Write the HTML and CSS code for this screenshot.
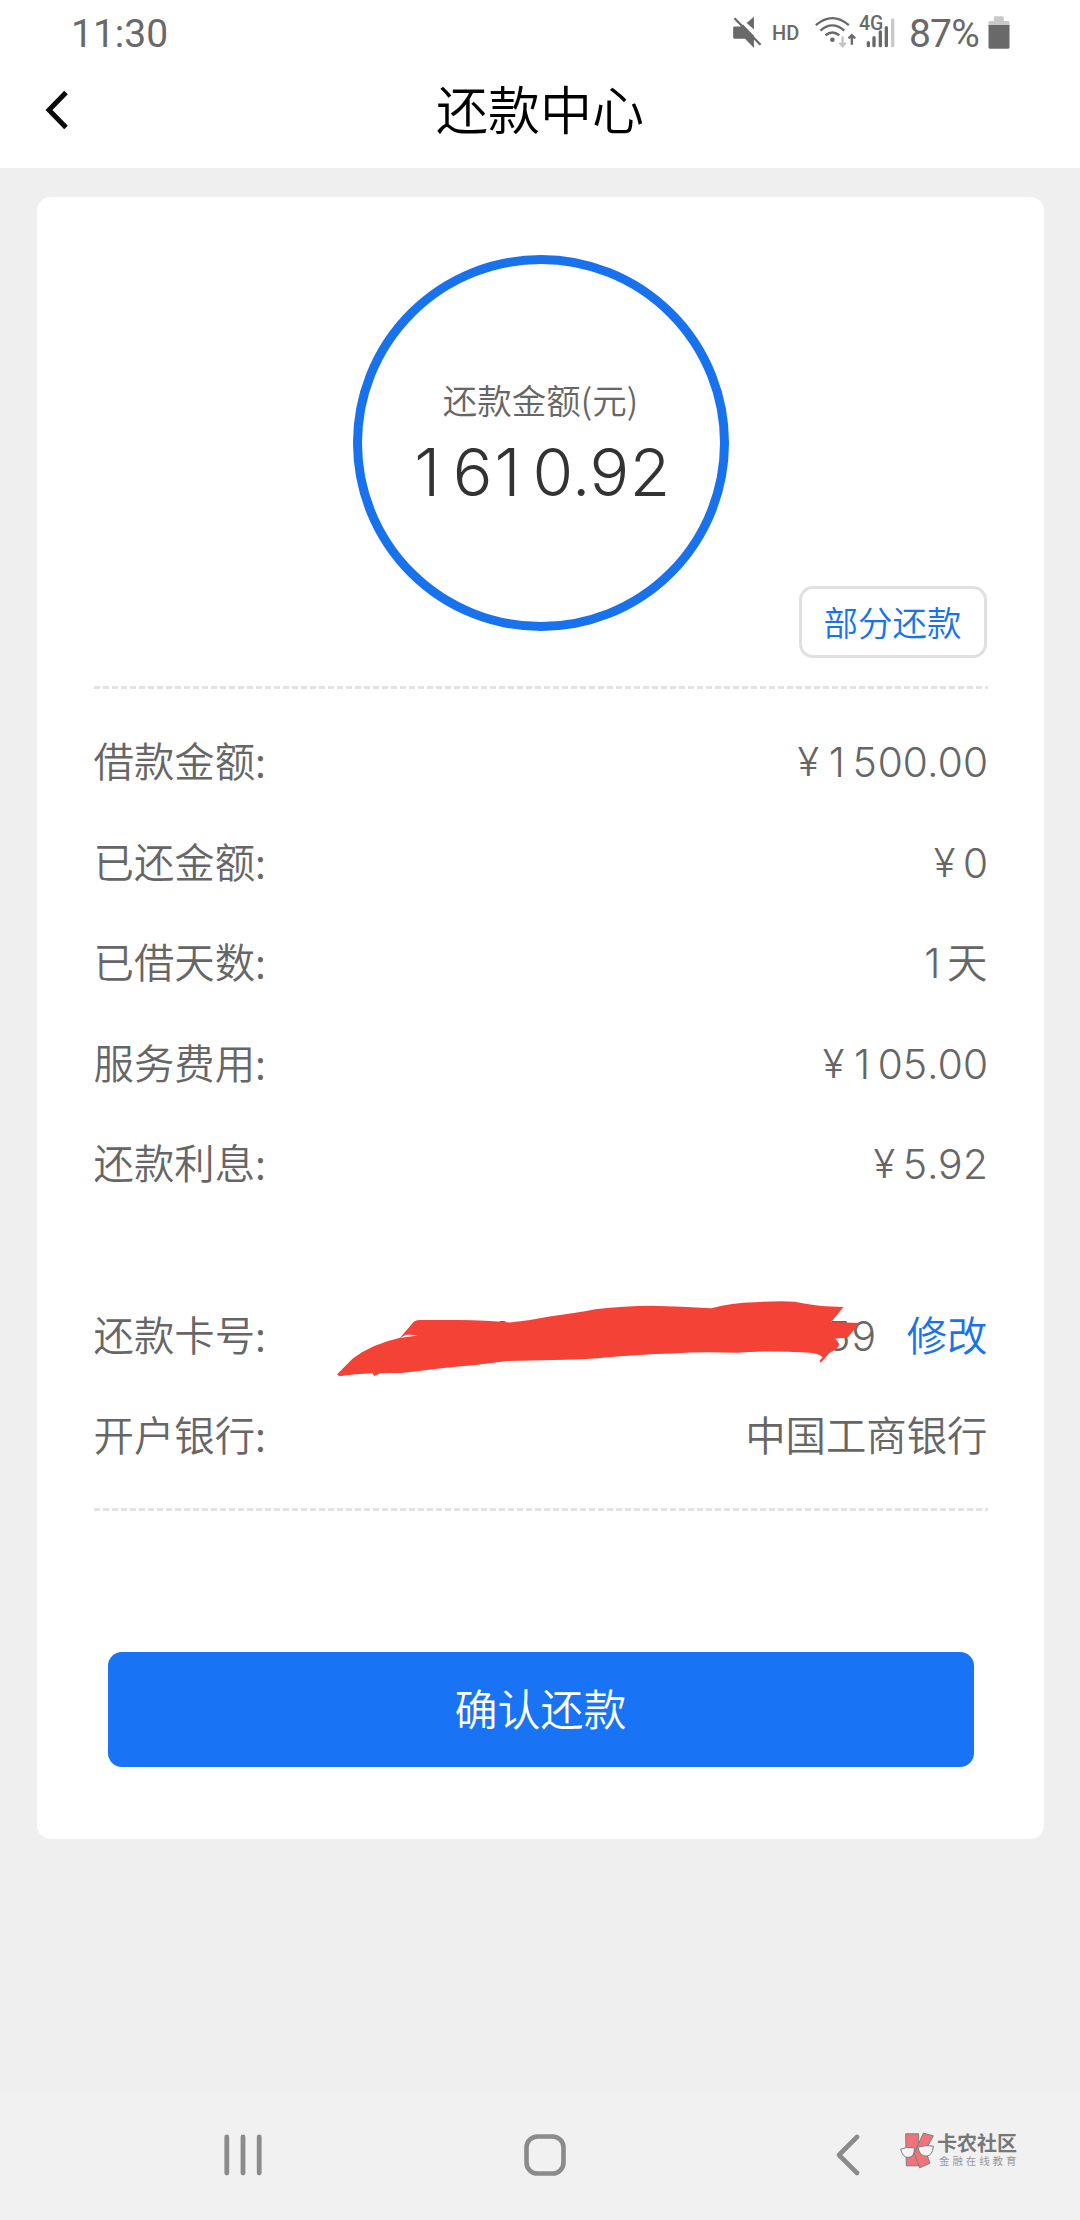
FILE: index.html
```html
<!DOCTYPE html>
<html lang="zh-CN">
<head>
<meta charset="utf-8">
<title>还款中心</title>
<link rel="stylesheet" href="styles.css">
</head>
<body>
<div class="screen">
  <header class="top">
    <div class="status">
      <span class="clock">11:30</span>
      <div class="status-icons">
        <svg class="mute" viewBox="95 48 87 100"><path d="M99 80h18l8-6 33 34v37l-27-28h-32q-4 0-4-5V85q0-5 4-5zM158 50v39l-22-20z" fill="#696969"/><path d="M99 55l79 80" stroke="#696969" stroke-width="7"/></svg>
        <span class="hd">HD</span>
        <svg class="wifi" viewBox="345 45 126 100"><g fill="none" stroke="#696969" stroke-width="7"><path d="M347 73q50-43 100 0M361 89q36-31 72 0M376 104q21-18 42 0"/><path d="M456 132v-29M446 113l10-10 10 10"/><path d="M428 107v28M418 126l10 10 10-10" stroke="#c4c4c4"/></g><circle cx="397" cy="117" r="7" fill="#696969"/></svg>
        <div class="cell">
          <svg class="bars" viewBox="478 48 108 96"><g stroke="#696969" stroke-width="10" stroke-linecap="round"><path d="M506 137v-9M523 137v-24M542 137v-41M560 137v-54"/><path d="M579 137V60" stroke="#c9c9c9"/></g></svg>
          <span class="cell-type">4G</span>
        </div>
        <span class="percent">87%</span>
        <svg class="battery" viewBox="863 48 65 99"><path d="M880 53q0-4 4-4h22q4 0 4 4v10h13q4 0 4 4v12h-63V67q0-4 4-4h12z" fill="#c9c9c9"/><path d="M864 75h63v67q0 4-4 4h-55q-4 0-4-4z" fill="#696969"/></svg>
      </div>
    </div>
    <div class="titlebar">
      <svg class="back" viewBox="0 0 24 40"><path d="M21 2.500L4 20l17 17.500" fill="none" stroke="#0a0a0a" stroke-width="5"/></svg>
      <h1 class="title">还款中心</h1>
    </div>
  </header>

  <main class="card">
    <div class="ring">
      <span class="ring-label">还款金额(元)</span>
      <span class="ring-amount"><span class="one">1</span>6<span class="one">1</span>0.92</span>
    </div>
    <div class="part-row"><button class="part">部分还款</button></div>
    <div class="dash"></div>
    <dl class="rows">
      <div class="row"><dt>借款金额:</dt><dd><span class="yen">¥</span><span class="num"><span class="one">1</span>500.00</span></dd></div>
      <div class="row"><dt>已还金额:</dt><dd><span class="yen">¥</span><span class="num">0</span></dd></div>
      <div class="row"><dt>已借天数:</dt><dd><span class="num"><span class="one">1</span></span><span class="cjk">天</span></dd></div>
      <div class="row"><dt>服务费用:</dt><dd><span class="yen">¥</span><span class="num"><span class="one">1</span>05.00</span></dd></div>
      <div class="row"><dt>还款利息:</dt><dd><span class="yen">¥</span><span class="num">5.92</span></dd></div>
    </dl>
    <dl class="rows bank">
      <div class="row card-row"><dt>还款卡号:</dt><dd><span class="num">59</span><a class="cjk edit">修改</a></dd>
        <svg class="scribble" viewBox="30 85 1180 235" preserveAspectRatio="none"><path d="M398 155q9-8 19 0z" fill="#555"/><path d="M37 312L72 264Q115 221 178 202L208 154Q213 148 222 148H310Q370 148 424 156Q470 150 512 138Q570 128 615 116Q680 105 740 105Q810 107 875 113Q920 97 972 95Q1025 90 1062 93Q1105 104 1131 107L1171 109L1143 154L1206 157L1180 202L1152 204L1162 221Q1157 236 1140 247L1120 277L1117 271L1124 261Q1118 247 1086 246Q1000 240 930 247Q850 243 790 249Q710 252 650 260Q590 268 550 268L418 272Q350 285 280 292Q220 302 180 308L134 309L120 317L116 309L78 312L42 318Z" fill="#f44336"/><path d="M178 202L218 195Q205 192 192 193Z" fill="#fff"/></svg>
      </div>
      <div class="row"><dt>开户银行:</dt><dd><span class="cjk">中国工商银行</span></dd></div>
    </dl>
    <div class="dash"></div>
    <button class="confirm">确认还款</button>
  </main>

  <nav class="nav">
    <svg class="recent" viewBox="0 0 38 42"><path d="M2.800 3v36M19 3v36M35.200 3v36" stroke="#8b8b8b" stroke-width="4.800" stroke-linecap="round"/></svg>
    <svg class="home" viewBox="0 0 42 42"><rect x="2.500" y="2.500" width="37" height="37" rx="11" fill="none" stroke="#8b8b8b" stroke-width="4.600"/></svg>
    <svg class="prev" viewBox="0 0 25 42"><path d="M22 3L4 21l18 18" fill="none" stroke="#8b8b8b" stroke-width="4.600" stroke-linecap="round" stroke-linejoin="round"/></svg>
    <div class="brand">
      <svg class="brand-logo" viewBox="60 66 102 110"><g fill="#f2727b" stroke="#7d7d7d" stroke-width="3" stroke-linejoin="round"><path d="M77 71h39v96H79z"/><path d="M130 69l30 8-24 44 14 38-31 14-16-44z"/></g><g fill="#f4f4f4" stroke="#7d7d7d" stroke-width="3"><path d="M62 117q18-9 41-4 2 28-19 29-17-1-22-25zM114 111q24-8 46-3-2 29-22 30-20 0-24-27z"/></g></svg>
      <div class="brand-text"><span class="brand-name">卡农社区</span><span class="brand-sub">金融在线教育</span></div>
    </div>
  </nav>
</div>
</body>
</html>
```
FILE: styles.css
```css
* { box-sizing: border-box; margin: 0; padding: 0; }
body { background: #efefef; font-family: "Noto Sans CJK SC", sans-serif; font-weight: 350; color: #666; }
svg { display: block; flex: none; }
button { font: inherit; }
.screen { width: 1080px; height: 2220px; display: flex; flex-direction: column; }

.top { height: 168px; background: #fff; }
.status { height: 68px; padding: 0 70px 0 71px; display: flex; justify-content: space-between; align-items: center; font-family: Roboto, sans-serif; font-weight: 400; color: #696969; }
.clock { font-size: 39px; line-height: 68px; }
.status-icons { display: flex; align-items: center; height: 68px; }
.mute { width: 29px; height: 33px; margin-right: 10px; margin-top: -3px; }
.hd { width: 27px; margin-right: 16px; font-size: 20px; line-height: 20px; font-weight: 500; margin-top: -3px; }
.wifi { width: 42px; height: 33px; margin-right: 2px; margin-top: -4px; }
.cell { position: relative; width: 36px; height: 32px; margin-right: 14px; margin-top: -4px; }
.bars { width: 36px; height: 32px; }
.cell-type { position: absolute; left: 0; top: -1px; font-size: 19.500px; line-height: 18px; font-weight: 500; }
.percent { width: 71px; margin-right: 8px; font-size: 39px; letter-spacing: -0.8px; }
.battery { width: 22px; height: 33px; margin-top: -3px; }

.titlebar { height: 84px; display: grid; grid-template-columns: 100px 1fr 100px; align-items: center; }
.back { width: 24px; height: 40px; margin-left: 45px; }
.title { text-align: center; font-size: 52px; line-height: 80px; padding-bottom: 4px; font-weight: 350; color: #000; }

.card { width: 1007px; height: 1642px; margin: 29px 0 0 36.500px; padding: 58px 56px 0 57px; background: #fff; border-radius: 14px; }
.ring { width: 376px; height: 376px; margin: 0 auto; border: 9px solid #1872ee; border-radius: 50%; display: flex; flex-direction: column; align-items: center; padding-top: 110px; }
.ring-label { font-size: 34.500px; line-height: 50px; }
.ring-amount { font-family: Inter, sans-serif; font-weight: 350; font-size: 66px; line-height: 80px; margin-top: 8px; letter-spacing: -2px; font-feature-settings: "tnum"; color: #333; white-space: nowrap; }
.one { display: inline-block; width: 0.6em; padding-left: 0.04em; text-align: left; font-feature-settings: normal; }
.part-row { display: flex; justify-content: flex-end; margin: -45px 1px 28px 0; }
.part { width: 188px; height: 72px; border: 3px solid #e0e0e0; border-radius: 14px; background: #fff; color: #1872ee; font-size: 34.500px; line-height: 62px; padding-bottom: 2px; }
.dash { height: 3px; background: repeating-linear-gradient(90deg, #e2e2e2 0 6px, transparent 6px 9px); }
.rows { padding-top: 23px; }
.row { height: 100.500px; display: flex; justify-content: space-between; align-items: center; font-size: 40.400px; line-height: 60px; }
.row dt, .cjk { padding-bottom: 4px; }
.row dd { display: flex; align-items: center; }
.num { font-family: Inter, sans-serif; font-weight: 350; font-size: 41px; letter-spacing: -1.300px; font-feature-settings: "tnum"; }
.num .one { margin-left: 1px; }
.yen { font-family: Inter, sans-serif; font-weight: 350; font-size: 40px; margin-right: 7px; }
.bank { padding: 71px 0 21px; }
.card-row { position: relative; }
.edit { color: #1872ee; margin-left: 31px; }
.scribble { position: absolute; left: 240px; top: 13px; width: 527px; height: 78px; }
.confirm { display: block; width: 866px; height: 115px; margin: 141px 0 0 14px; border: 0; border-radius: 14px; background: #1873f5; color: #fff; font-size: 43px; line-height: 100px; padding-bottom: 4px; }

.nav { height: 128px; margin-top: auto; background: #f1f1f1; display: flex; align-items: flex-start; padding: 42px 0 0 224px; }
.recent { width: 38px; height: 42px; }
.home { width: 42px; height: 42px; margin-left: 262px; }
.prev { width: 25px; height: 42px; margin-left: 269px; }
.brand { display: flex; margin-left: 40px; margin-top: -2px; }
.brand-logo { width: 34px; height: 37px; }
.brand-text { display: flex; flex-direction: column; margin-left: 3px; white-space: nowrap; }
.brand-name { font-size: 20px; line-height: 22px; font-weight: 700; color: #777; }
.brand-sub { font-size: 10.500px; line-height: 14px; letter-spacing: 2.900px; margin-left: 2px; color: #999; font-weight: 400; }
```
